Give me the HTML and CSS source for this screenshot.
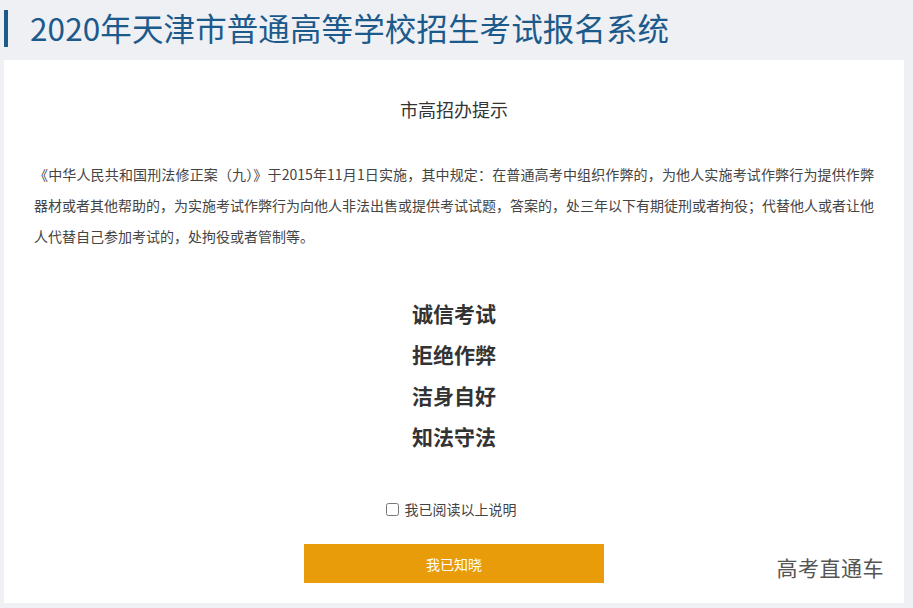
FILE: index.html
```html
<!DOCTYPE html>
<html lang="zh-CN">
<head>
<meta charset="utf-8">
<title>2020年天津市普通高等学校招生考试报名系统</title>
<link rel="stylesheet" href="styles.css">
</head>
<body>
<header class="header">
  <h1 class="title">2020年天津市普通高等学校招生考试报名系统</h1>
</header>
<main class="card">
  <h2 class="notice-title">市高招办提示</h2>
  <p class="notice-text">《中华人民共和国刑法修正案（九）》于2015年11月1日实施，其中规定：在普通高考中组织作弊的，为他人实施考试作弊行为提供作弊器材或者其他帮助的，为实施考试作弊行为向他人非法出售或提供考试试题，答案的，处三年以下有期徒刑或者拘役；代替他人或者让他人代替自己参加考试的，处拘役或者管制等。</p>
  <div class="slogans">
    <div class="slogan">诚信考试</div>
    <div class="slogan">拒绝作弊</div>
    <div class="slogan">洁身自好</div>
    <div class="slogan">知法守法</div>
  </div>
  <label class="agree"><input type="checkbox" class="agree-box"><span>我已阅读以上说明</span></label>
  <button class="confirm" type="button">我已知晓</button>
  <div class="watermark">高考直通车</div>
</main>
</body>
</html>
```
FILE: styles.css
```css
html, body {
  margin: 0;
  padding: 0;
}
body {
  background: #eef0f3;
  font-family: "Noto Sans CJK SC", "Noto Sans", sans-serif;
  color: #333;
  width: 913px;
  height: 608px;
  overflow: hidden;
}
.header {
  height: 60px;
  padding: 10px 0 0 4px;
  box-sizing: border-box;
}
.title {
  margin: 0;
  height: 37px;
  border-left: 4px solid #1d5a8c;
  padding-left: 22px;
  font-size: 31.5px;
  font-weight: normal;
  line-height: 35px;
  color: #1d5a8c;
  letter-spacing: 0.1px;
}
.card {
  position: relative;
  margin-left: 4px;
  width: 900px;
  height: 543px;
  background: #fff;
  box-sizing: border-box;
  padding: 37px 30px 0 30px;
  display: flex;
  flex-direction: column;
  align-items: center;
}
.notice-title {
  margin: 0;
  font-size: 18px;
  font-weight: normal;
  line-height: 24px;
  color: #333;
}
.notice-text {
  margin: 38px 0 0 0;
  width: 840px;
  font-size: 14px;
  line-height: 31px;
  color: #444;
  text-align: justify;
}
.slogans {
  margin-top: 41px;
  display: flex;
  flex-direction: column;
  align-items: center;
}
.slogan {
  font-size: 21px;
  font-weight: bold;
  line-height: 41px;
  color: #333;
}
.agree {
  margin-top: 42px;
  display: flex;
  align-items: center;
  font-size: 14px;
  color: #444;
  line-height: 20px;
  margin-left: -6px;
}
.agree-box {
  margin: 0 6px 0 0;
  width: 13px;
  height: 13px;
}
.confirm {
  margin-top: 25px;
  width: 300px;
  height: 39px;
  border: none;
  background: #e99c0a;
  color: #fff;
  font-family: "Noto Sans CJK SC", sans-serif;
  font-size: 14px;
  cursor: pointer;
}
.watermark {
  position: absolute;
  right: 20px;
  top: 492px;
  font-size: 21px;
  color: #555;
  letter-spacing: 0.5px;
}
```
